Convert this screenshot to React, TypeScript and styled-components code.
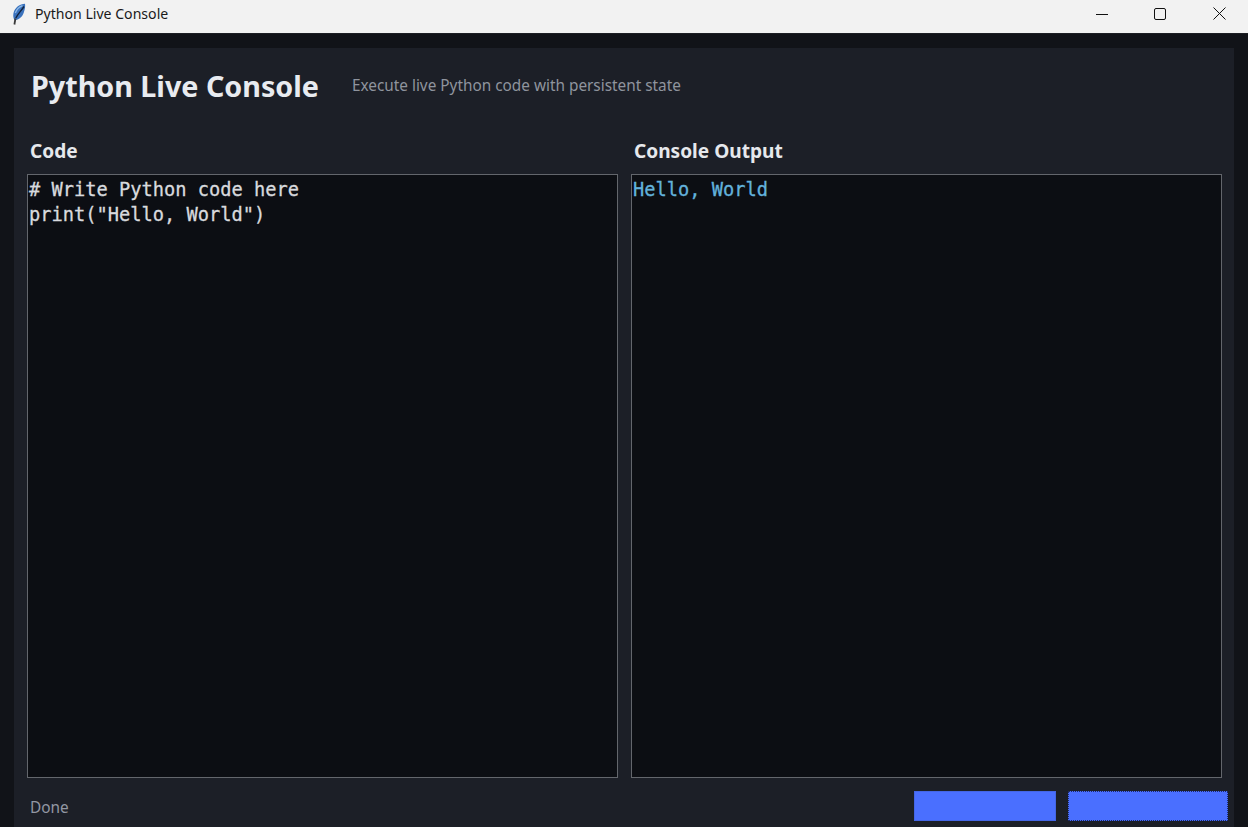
import styled, { createGlobalStyle } from 'styled-components';

const GlobalStyle = createGlobalStyle`
  html, body {
    margin: 0;
    padding: 0;
    width: 100%;
    height: 100%;
    overflow: hidden;
    background: #111318;
  }
`;

function App() {
  return (
    <>
      <GlobalStyle />
      <Window>
        <TitleBar>
          <TitleLeft>
            <svg width="16" height="22" viewBox="0 0 16 22">
              <path d="M14 0.8 C9 1 3.8 4.5 2.5 10 C1.9 13 2.4 15.5 3.6 17.2 C8 16.8 11.5 13.8 12.8 9.5 C13.8 6.5 14.5 3.5 14 0.8 Z" fill="#3a72bd" />
              <path d="M11.5 2.6 C8 4 5.4 6.8 4.3 10" stroke="#8db8e6" strokeWidth="1.3" fill="none" />
              <path d="M13 3.5 C10.4 7.5 7 11 4.8 15" stroke="#12233d" strokeWidth="1.4" fill="none" />
              <path d="M4.4 15.5 L3.4 21.5" stroke="#3a3a3a" strokeWidth="1.8" fill="none" />
            </svg>
            <TitleText>Python Live Console</TitleText>
          </TitleLeft>
          <WindowButtons>
            <WindowButton $nudge={2}>
              <svg width="12" height="12" viewBox="0 0 12 12">
                <path d="M0 6.5 H12" stroke="#111" strokeWidth="1" />
              </svg>
            </WindowButton>
            <WindowButton $nudge={2}>
              <svg width="12" height="12" viewBox="0 0 12 12">
                <rect x="0.5" y="0.5" width="11" height="11" rx="1.5" fill="none" stroke="#111" strokeWidth="1" />
              </svg>
            </WindowButton>
            <WindowButton>
              <svg width="13" height="13" viewBox="0 0 13 13">
                <path d="M0.5 0.5 L12.5 12.5 M12.5 0.5 L0.5 12.5" stroke="#111" strokeWidth="1" />
              </svg>
            </WindowButton>
          </WindowButtons>
        </TitleBar>
        <Panel>
          <Header>
            <Title>Python Live Console</Title>
            <Subtitle>Execute live Python code with persistent state</Subtitle>
          </Header>
          <Columns>
            <Column>
              <ColumnLabel>Code</ColumnLabel>
              <CodeBox>
                {'# Write Python code here\nprint("Hello, World")'}
              </CodeBox>
            </Column>
            <Column>
              <ColumnLabel>Console Output</ColumnLabel>
              <CodeBox $output>Hello, World</CodeBox>
            </Column>
          </Columns>
          <Footer>
            <Status>Done</Status>
            <Buttons>
              <ActionButton $width={142} />
              <ActionButton $width={160} $focused />
            </Buttons>
          </Footer>
        </Panel>
      </Window>
    </>
  );
}

export default App;

const Window = styled.div`
  width: 1248px;
  height: 827px;
  display: flex;
  flex-direction: column;
  overflow: hidden;
  background: #111318;
`;

const TitleBar = styled.div`
  height: 34px;
  flex: none;
  box-sizing: border-box;
  padding-bottom: 6px;
  display: flex;
  align-items: center;
  justify-content: space-between;
  background: #f2f2f2;
  border-bottom: 1px solid #1d1f24;
`;

const TitleLeft = styled.div`
  display: flex;
  align-items: center;
  gap: 8px;
  padding-left: 11px;
`;

const TitleText = styled.span`
  font-family: 'Noto Sans', 'Open Sans', sans-serif;
  font-size: 14.1px;
  color: #1a1a1a;
`;

const WindowButtons = styled.div`
  display: flex;
  height: 100%;
`;

const WindowButton = styled.div<{ $nudge?: number }>`
  width: 58px;
  height: 100%;
  box-sizing: border-box;
  padding-right: ${(p) => p.$nudge ?? 0}px;
  display: flex;
  align-items: center;
  justify-content: center;
`;

const Panel = styled.div`
  flex: 1;
  margin: 14px 14px 0;
  padding: 0 6px 0 13px;
  display: flex;
  flex-direction: column;
  background: #1c1f27;
  min-height: 0;
`;

const Header = styled.div`
  height: 76px;
  flex: none;
  box-sizing: border-box;
  padding: 0 0 1px 4px;
  display: flex;
  align-items: center;
  gap: 33px;
`;

const Title = styled.h1`
  margin: 0;
  font-family: 'Noto Sans', 'Open Sans', sans-serif;
  font-size: 28.7px;
  font-weight: 700;
  color: #e8ebf0;
`;

const Subtitle = styled.span`
  margin-bottom: 2px;
  font-family: 'Noto Sans', 'Open Sans', sans-serif;
  font-size: 15.35px;
  color: #8f949e;
`;

const Columns = styled.div`
  height: 654px;
  flex: none;
  display: grid;
  grid-template-columns: 591px 591px;
  gap: 13px;
`;

const Column = styled.div`
  display: flex;
  flex-direction: column;
  min-width: 0;
`;

const ColumnLabel = styled.div`
  height: 50px;
  flex: none;
  box-sizing: border-box;
  padding: 3px 0 0 3px;
  display: flex;
  align-items: center;
  font-family: 'Noto Sans', 'Open Sans', sans-serif;
  font-size: 19.1px;
  font-weight: 700;
  color: #e6e8ec;
`;

const CodeBox = styled.pre<{ $output?: boolean }>`
  flex: 1;
  margin: 0;
  padding: 2px 1px;
  box-sizing: border-box;
  border: 1px solid #63666c;
  background: #0c0e13;
  font-family: 'DejaVu Sans Mono', 'Liberation Mono', monospace;
  font-size: 18.7px;
  line-height: 25px;
  -webkit-text-stroke: 0.3px currentColor;
  color: ${(p) => (p.$output ? '#62b2dc' : '#d8dade')};
`;

const Footer = styled.div`
  flex: 1;
  min-height: 0;
  display: flex;
  align-items: flex-start;
  justify-content: space-between;
  padding: 13px 0 0 3px;
`;

const Status = styled.span`
  font-family: 'Noto Sans', 'Open Sans', sans-serif;
  font-size: 15.4px;
  line-height: 34px;
  color: #9297a3;
`;

const Buttons = styled.div`
  display: flex;
  gap: 12px;
`;

const ActionButton = styled.div<{ $width: number; $focused?: boolean }>`
  width: ${(p) => p.$width}px;
  height: 30px;
  box-sizing: border-box;
  background: #4a6fff;
  border: 1px ${(p) => (p.$focused ? 'dotted #1c2a66' : 'solid #4466e6')};
`;
